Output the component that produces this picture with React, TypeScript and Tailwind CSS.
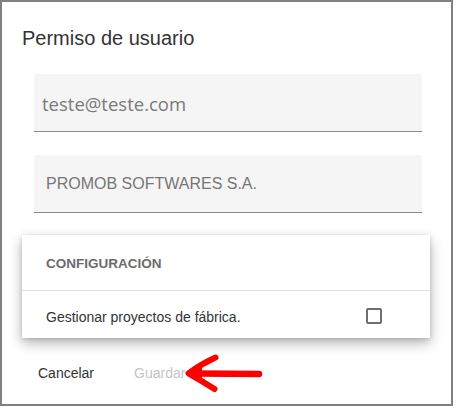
import React from "react";

export default function App() {
  return (
    <div className="relative w-[457px] h-[409px] bg-white overflow-hidden">
      <div className="w-[453px] h-[406px] border-2 border-[#808080] bg-white flex flex-col">
        <div
          className="mt-[22px] ml-[20px] text-[20px] leading-[28px] text-[#333333]"
          style={{ fontFamily: '"Liberation Sans", Arial, sans-serif' }}
        >
          Permiso de usuario
        </div>

        <div className="mt-[22px] ml-[32px] w-[388px] h-[58px] bg-[#f5f5f5] rounded-t-[4px] border-b border-[#8a8a8a] pl-[8px] pt-[17px]">
          <div
            className="text-[18.5px] leading-[26px] text-[#7a7a7a]"
            style={{ fontFamily: '"Open Sans", "Noto Sans", sans-serif' }}
          >
            teste@teste.com
          </div>
        </div>

        <div className="mt-[23px] ml-[32px] w-[388px] h-[58px] bg-[#f5f5f5] rounded-t-[4px] border-b border-[#8a8a8a] pl-[12px] pt-[20px]">
          <div
            className="text-[16px] leading-[18px] text-[#767676]"
            style={{ fontFamily: '"Liberation Sans", Arial, sans-serif' }}
          >
            PROMOB SOFTWARES S.A.
          </div>
        </div>

        <div
          className="mt-[22px] ml-[20px] w-[408px] bg-white shadow-[0_5px_12px_rgba(0,0,0,0.3),0_1px_4px_rgba(0,0,0,0.12)] flex flex-col"
          style={{ fontFamily: '"Liberation Sans", Arial, sans-serif' }}
        >
          <div className="h-[55px] pt-[21px] pl-[24px] text-[13.5px] leading-[16px] font-bold text-[#6b6b6b]">
            CONFIGURACIÓN
          </div>
          <div className="h-px bg-[#e0e0e0]" />
          <div className="h-[47px] flex items-center justify-between pl-[24px] pr-[48px]">
            <span className="pt-[4px] text-[14px] leading-[16px] text-[#333333]">
              Gestionar proyectos de fábrica.
            </span>
            <span className="mt-[2px] w-[16px] h-[16px] border-2 border-[#6e6e6e] rounded-[2px]" />
          </div>
        </div>

        <div
          className="mt-[25px] ml-[36px] flex gap-[40px] text-[14px] leading-[20px]"
          style={{ fontFamily: '"Liberation Sans", Arial, sans-serif' }}
        >
          <span className="text-[#333333]">Cancelar</span>
          <span className="text-[#c4c4c4]">Guardar</span>
        </div>
      </div>

      <svg
        className="absolute left-0 top-0 pointer-events-none"
        width="457"
        height="409"
        viewBox="0 0 457 409"
      >
        <path
          d="M259 374 L196 373.5"
          stroke="#ff0000"
          strokeWidth="6.5"
          strokeLinecap="round"
          fill="none"
        />
        <path
          d="M215.5 357.5 Q201 364 188.5 373.3 Q202 381 214.5 389"
          stroke="#ff0000"
          strokeWidth="6"
          strokeLinecap="round"
          strokeLinejoin="round"
          fill="none"
        />
        <polygon points="187,373.3 202,365.5 202,381" fill="#ff0000" />
      </svg>
    </div>
  );
}
